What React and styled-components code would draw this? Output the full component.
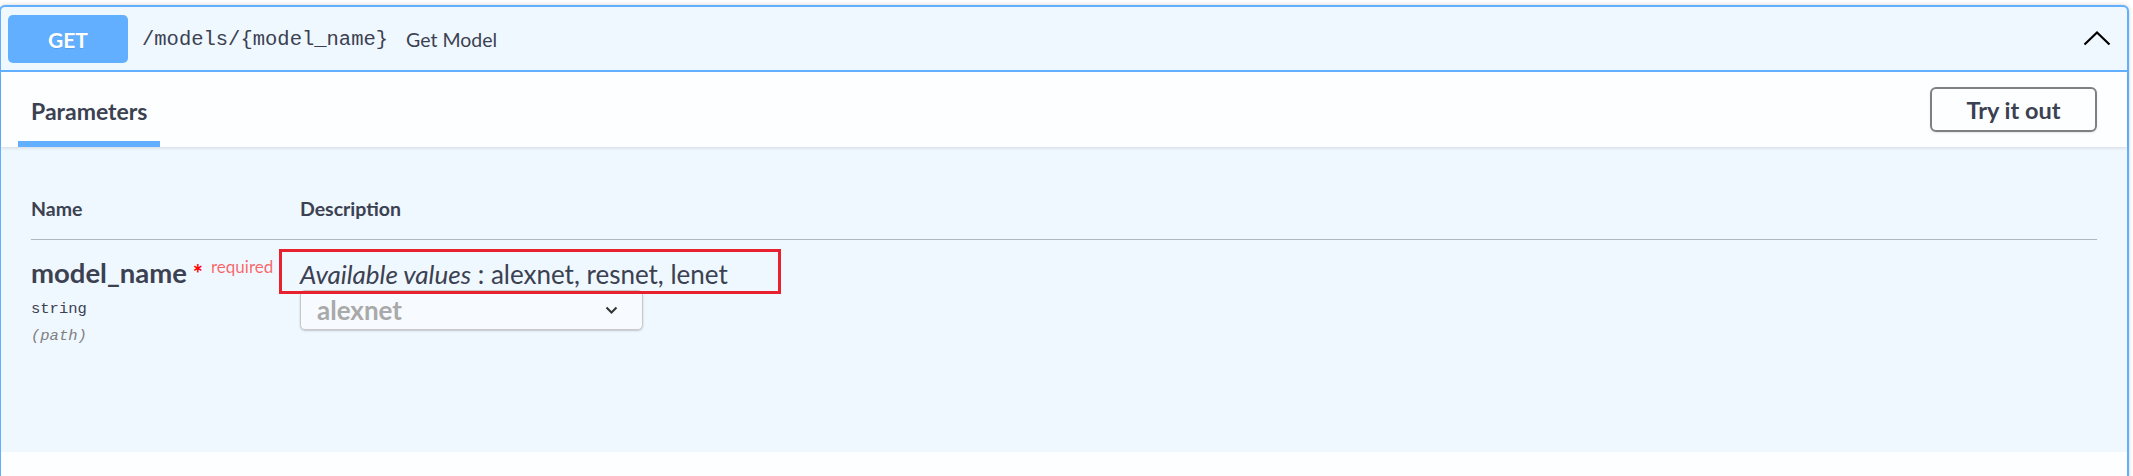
import React from "react";
import styled, { createGlobalStyle } from "styled-components";

const Global = createGlobalStyle`
  html, body { margin: 0; padding: 0; overflow: hidden; background: #ffffff; }
  body { font-family: Lato, "Noto Sans", sans-serif; color: #3b4151; }
  * { box-sizing: border-box; }
`;

const Page = styled.div`
  width: 2133px;
  height: 476px;
  padding-top: 5px;
  overflow: hidden;
`;

const OpBlock = styled.div`
  margin-left: -1px;
  width: 2130px;
  border: 2px solid #61affe;
  border-radius: 6px;
  background: #eff7ff;
  box-shadow: 0 0 4px rgba(0, 0, 0, 0.19);
`;

const Summary = styled.div`
  display: flex;
  align-items: center;
  padding: 8px 7px 7px;
  border-bottom: 2px solid #61affe;
`;

const Method = styled.span`
  width: 120px;
  height: 48px;
  display: flex;
  align-items: center;
  justify-content: center;
  background: #61affe;
  border-radius: 5px;
  color: #fff;
  font-weight: 700;
  font-size: 21px;
  text-shadow: 0 1px 0 rgba(0, 0, 0, 0.1);
`;

const Path = styled.span`
  margin-left: 14px;
  font-family: "Liberation Mono", monospace;
  font-size: 20.5px;
  color: #3b4151;
`;

const Desc = styled.span`
  margin-left: 18px;
  font-size: 19.5px;
  color: #3b4151;
  flex: 1;
`;

const Arrow = styled.svg`
  width: 28px;
  height: 16px;
  margin-right: 9px;
  margin-top: -2px;
`;

const SectionHeader = styled.div`
  display: flex;
  justify-content: space-between;
  align-items: stretch;
  height: 75px;
  padding: 0 30px 0 17px;
  background: rgba(255, 255, 255, 0.8);
  box-shadow: 0 1.5px 3px rgba(0, 0, 0, 0.1);
  position: relative;
`;

const Tab = styled.div`
  display: flex;
  align-items: center;
  padding: 9px 13px 0;
  border-bottom: 6px solid #61affe;
  font-weight: 700;
  font-size: 23px;
  color: #3b4151;
`;

const TryButton = styled.button`
  align-self: center;
  width: 167px;
  height: 45px;
  border: 2px solid #808080;
  border-radius: 6px;
  background: transparent;
  font-family: Lato, sans-serif;
  font-weight: 700;
  font-size: 23.5px;
  color: #3b4151;
  box-shadow: 0 1px 2px rgba(0, 0, 0, 0.1);
`;

const TableContainer = styled.div`
  padding: 30px 30px 0;
  height: 305px;
`;

const Row = styled.div`
  display: grid;
  grid-template-columns: 269px 1fr;
  ${(p) => (p.$head ? "border-bottom: 1.5px solid rgba(59,65,81,.35);" : "")}
  padding: ${(p) => (p.$head ? "18px 0 17px" : "15px 0")};
`;

const Th = styled.div`
  font-weight: 700;
  font-size: 19.5px;
  line-height: 27px;
  color: #3b4151;
`;

const NameCell = styled.div`
  display: flex;
  flex-direction: column;
`;

const ParamName = styled.div`
  font-weight: 700;
  font-size: 27.5px;
  line-height: 36px;
  color: #3b4151;
  white-space: nowrap;
`;

const Star = styled.span`
  color: red;
  font-size: 24px;
`;

const Required = styled.span`
  color: rgba(255, 0, 0, 0.6);
  font-size: 17px;
  font-weight: 400;
  position: relative;
  top: -10px;
  padding-left: 8px;
`;

const ParamType = styled.div`
  font-family: "Liberation Mono", monospace;
  font-size: 15.5px;
  line-height: 26px;
  margin-top: 1px;
  color: #3b4151;
`;

const ParamIn = styled.div`
  font-family: "Liberation Mono", monospace;
  font-style: italic;
  font-size: 15.5px;
  line-height: 28px;
  color: #808080;
`;

const DescCell = styled.div`
  display: flex;
  flex-direction: column;
  align-items: flex-start;
  padding-top: 3px;
`;

const Markdown = styled.p`
  margin: 0;
  font-size: 26px;
  line-height: 32px;
  color: #3b4151;
  position: relative;
  em { font-style: italic; }
`;

const Highlight = styled.span`
  position: absolute;
  left: -21px;
  top: -9px;
  width: 502px;
  height: 45px;
  border: 3px solid #e8212f;
  pointer-events: none;
`;

const Select = styled.div`
  width: 343px;
  height: 40px;
  display: flex;
  align-items: center;
  justify-content: space-between;
  padding: 0 24px 0 16px;
  border: 1px solid #c8c8c8;
  border-radius: 5px;
  background: rgba(255, 255, 255, 0.5);
  box-shadow: 0 1px 2px rgba(0, 0, 0, 0.2);
  font-weight: 700;
  font-size: 26px;
  color: #a9a9a9;
`;

const Chevron = styled.svg`
  width: 13px;
  height: 9px;
`;

const LowerSection = styled.div`
  height: 75px;
  background: rgba(255, 255, 255, 0.8);
`;

export default function App() {
  return (
    <Page>
      <Global />
      <OpBlock>
        <Summary>
          <Method>GET</Method>
          <Path>/models/&#8203;{"{model_name}"}</Path>
          <Desc>Get Model</Desc>
          <Arrow viewBox="0 0 28 16">
            <polyline points="1.5,14.5 14,2.5 26.5,14.5" fill="none" stroke="#000" strokeWidth="2.2" />
          </Arrow>
        </Summary>
        <SectionHeader>
          <Tab>Parameters</Tab>
          <TryButton>Try it out</TryButton>
        </SectionHeader>
        <TableContainer>
          <Row $head>
            <Th>Name</Th>
            <Th>Description</Th>
          </Row>
          <Row>
            <NameCell>
              <ParamName>
                model_name<Star>&nbsp;*</Star>
                <Required>required</Required>
              </ParamName>
              <ParamType>string</ParamType>
              <ParamIn>(path)</ParamIn>
            </NameCell>
            <DescCell>
              <Markdown>
                <em>Available values</em> : alexnet, resnet, lenet
                <Highlight />
              </Markdown>
              <Select>
                <span>alexnet</span>
                <Chevron viewBox="0 0 13 9">
                  <polyline points="1.5,1.5 6.5,6.5 11.5,1.5" fill="none" stroke="#333" strokeWidth="2" />
                </Chevron>
              </Select>
            </DescCell>
          </Row>
        </TableContainer>
        <LowerSection />
      </OpBlock>
    </Page>
  );
}
